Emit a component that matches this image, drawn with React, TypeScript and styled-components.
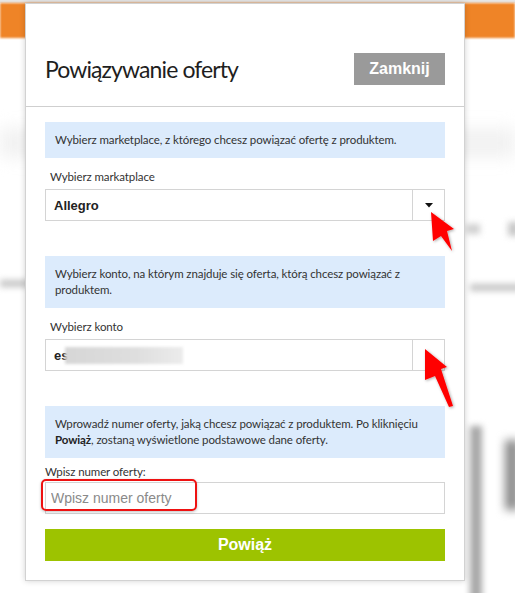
import React from "react";
import styled, { createGlobalStyle } from "styled-components";

const Global = createGlobalStyle`
  html, body { margin: 0; padding: 0; background: #fff; }
  body { width: 515px; height: 593px; overflow: hidden; }
`;

const thin = `Lato, "Open Sans", sans-serif`;
const arial = `"Liberation Sans", Arial, sans-serif`;

const Page = styled.div`
  position: relative;
  width: 515px;
  height: 593px;
  overflow: hidden;
  background: #fff;
  display: flex;
  flex-direction: column;
`;

const TopStrip = styled.div`
  height: 3px;
  background: #e6e6e6;
`;

const OrangeBar = styled.div`
  height: 35px;
  background: #ef8427;
  filter: blur(1px);
`;

const Blob = styled.div<{ $x: number; $y: number; $w: number; $h: number; $c: string; $b: number }>`
  position: absolute;
  left: ${(p) => p.$x}px;
  top: ${(p) => p.$y}px;
  width: ${(p) => p.$w}px;
  height: ${(p) => p.$h}px;
  background: ${(p) => p.$c};
  filter: blur(${(p) => p.$b}px);
`;

const Modal = styled.div`
  position: absolute;
  left: 25px;
  top: 3px;
  width: 438px;
  height: 576px;
  background: #fff;
  border: 1px solid #d2d2d2;
  box-shadow: 0 0 6px rgba(0, 0, 0, 0.18);
  display: flex;
  flex-direction: column;
`;

const Header = styled.div`
  height: 103px;
  box-sizing: border-box;
  border-bottom: 1px solid #cfcfcf;
  display: flex;
  align-items: center;
  justify-content: space-between;
  padding: 39px 19px 12px;
`;

const Title = styled.h1`
  margin: 0;
  font-family: ${thin};
  font-weight: 400;
  font-size: 23px;
  color: #1e1e1e;
  letter-spacing: -0.9px;
`;

const CloseButton = styled.button`
  width: 91px;
  height: 32px;
  border: none;
  background: #9a9a9a;
  color: #fff;
  font-family: ${arial};
  font-weight: 700;
  font-size: 16px;
  padding: 0;
  cursor: pointer;
`;

const Body = styled.div`
  padding: 15px 19px 0;
  display: flex;
  flex-direction: column;
`;

const Info = styled.div<{ $mt?: number }>`
  margin-top: ${(p) => p.$mt ?? 0}px;
  background: #dcebfc;
  padding: 10px 10px;
  font-family: ${thin};
  font-size: 11.5px;
  letter-spacing: -0.1px;
  line-height: 16px;
  white-space: nowrap;
  color: #333;
  b { font-weight: 700; color: #222; }
`;

const Label = styled.div<{ $indent: number; $mt: number; $mb: number }>`
  margin: ${(p) => p.$mt}px 0 ${(p) => p.$mb}px ${(p) => p.$indent}px;
  font-family: ${thin};
  font-size: 11.5px;
  letter-spacing: -0.1px;
  line-height: 20px;
  color: #333;
`;

const Select = styled.div`
  height: 32px;
  box-sizing: border-box;
  border: 1px solid #d4d4d4;
  display: flex;
  align-items: stretch;
`;

const SelectValue = styled.div`
  flex: 1;
  display: flex;
  align-items: center;
  padding-left: 8px;
  font-family: ${arial};
  font-weight: 700;
  font-size: 13px;
  color: #222;
`;

const Redacted = styled.span`
  display: inline-block;
  width: 118px;
  height: 17px;
  margin-left: -3px;
  background: linear-gradient(90deg, #d6d6d6, #dedede 60%, #ececec);
  filter: blur(1.5px);
`;

const Caret = styled.div`
  width: 31px;
  border-left: 1px solid #d4d4d4;
  display: flex;
  align-items: center;
  justify-content: center;
`;

const Input = styled.input`
  height: 32px;
  box-sizing: border-box;
  border: 1px solid #d4d4d4;
  padding: 0 0 0 5px;
  font-family: ${arial};
  font-size: 14px;
  color: #333;
  outline: none;
  &::placeholder { color: #8a8a8a; }
`;

const Submit = styled.button`
  margin-top: 15px;
  height: 32px;
  border: none;
  background: #9dc300;
  color: #fff;
  font-family: ${arial};
  font-weight: 700;
  font-size: 16px;
  cursor: pointer;
`;

const Highlight = styled.div`
  position: absolute;
  left: 41px;
  top: 479px;
  width: 152px;
  height: 28px;
  border: 2px solid #ee1111;
  border-radius: 5px;
  box-shadow: 0 1px 3px rgba(0, 0, 0, 0.25);
  pointer-events: none;
`;

const Overlay = styled.svg`
  position: absolute;
  left: 0;
  top: 0;
  pointer-events: none;
`;

const CaretIcon = () => (
  <svg width="8" height="5" viewBox="0 0 8 5">
    <path d="M0 0 H8 L4 4.5 Z" fill="#111" />
  </svg>
);

export default function App() {
  return (
    <>
      <Global />
      <Page>
        <TopStrip />
        <OrangeBar />
        <Blob $x={0} $y={128} $w={515} $h={30} $c="#f2f2f2" $b={8} />
        <Blob $x={0} $y={280} $w={30} $h={7} $c="#c4c4c4" $b={3} />
        <Blob $x={470} $y={284} $w={60} $h={7} $c="#c4c4c4" $b={3} />
        <Blob $x={466} $y={224} $w={14} $h={10} $c="#cfcfcf" $b={3} />
        <Blob $x={508} $y={222} $w={12} $h={14} $c="#c8c8c8" $b={3} />
        <Blob $x={470} $y={426} $w={12} $h={180} $c="#a8a8a8" $b={3} />
        <Blob $x={505} $y={440} $w={14} $h={70} $c="#8a8a8a" $b={5} />
        <Modal>
          <Header>
            <Title>Powiązywanie oferty</Title>
            <CloseButton>Zamknij</CloseButton>
          </Header>
          <Body>
            <Info>Wybierz marketplace, z którego chcesz powiązać ofertę z produktem.</Info>
            <Label $indent={5} $mt={9} $mb={2}>Wybierz markatplace</Label>
            <Select>
              <SelectValue>Allegro</SelectValue>
              <Caret><CaretIcon /></Caret>
            </Select>
            <Info $mt={35}>Wybierz konto, na którym znajduje się oferta, którą chcesz powiązać z<br />produktem.</Info>
            <Label $indent={5} $mt={9} $mb={2}>Wybierz konto</Label>
            <Select>
              <SelectValue>es<Redacted /></SelectValue>
              <Caret />
            </Select>
            <Info $mt={35}>
              Wprowadź numer oferty, jaką chcesz powiązać z produktem. Po kliknięciu<br /><b>Powiąż</b>, zostaną wyświetlone podstawowe dane oferty.
            </Info>
            <Label $indent={0} $mt={4} $mb={0}>Wpisz numer oferty:</Label>
            <Input placeholder="Wpisz numer oferty" />
            <Submit>Powiąż</Submit>
          </Body>
        </Modal>
        <Highlight />
        <Overlay width="515" height="593" viewBox="0 0 515 593">
          <defs>
            <filter id="sh" x="-50%" y="-50%" width="200%" height="200%">
              <feDropShadow dx="1" dy="1" stdDeviation="1.5" floodColor="#000" floodOpacity="0.35" />
            </filter>
          </defs>
          <path d="M431 212 L454 229 L447 231 L452 251 L441 236 L433 241 Z" fill="#ff0000" filter="url(#sh)" />
          <path d="M425 349 L447 367 L441 369 L453 406 L449 407 L435 376 L425 380 Z" fill="#ff0000" filter="url(#sh)" />
        </Overlay>
      </Page>
    </>
  );
}
